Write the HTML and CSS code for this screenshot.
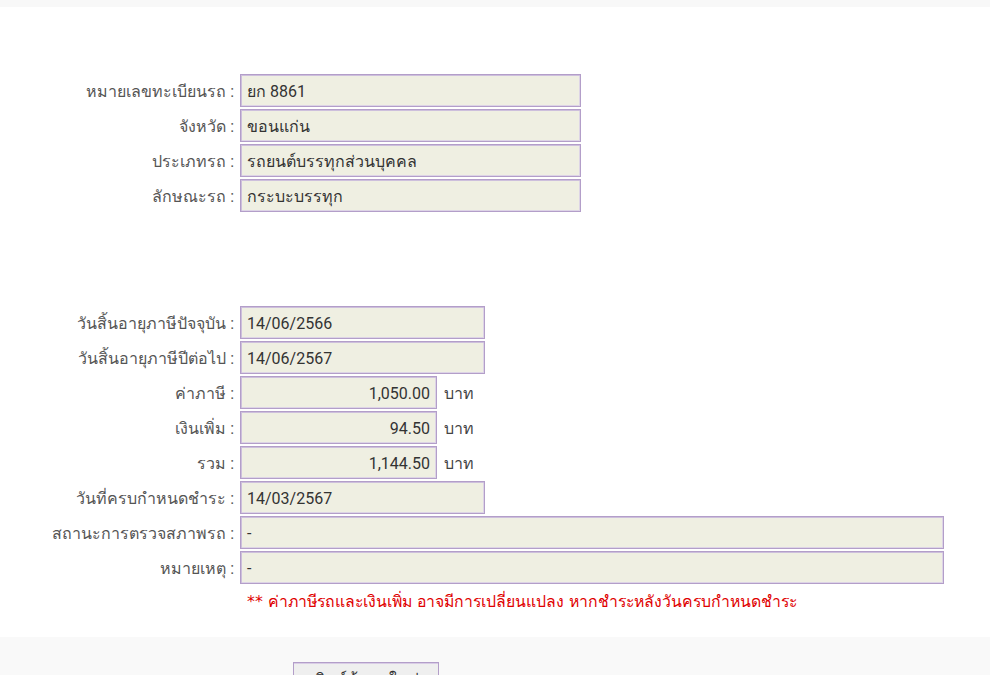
FILE: index.html
```html
<!DOCTYPE html>
<html lang="th">
<head>
<meta charset="utf-8">
<title>ผลการตรวจสอบภาษีรถ</title>
<link rel="stylesheet" href="styles.css">
</head>
<body>
<div class="topbar"></div>
<main class="content">
  <section class="group">
    <div class="label">หมายเลขทะเบียนรถ :</div>
    <div class="field"><div class="box w-mid">ยก 8861</div></div>
    <div class="label">จังหวัด :</div>
    <div class="field"><div class="box w-mid">ขอนแก่น</div></div>
    <div class="label">ประเภทรถ :</div>
    <div class="field"><div class="box w-mid">รถยนต์บรรทุกส่วนบุคคล</div></div>
    <div class="label">ลักษณะรถ :</div>
    <div class="field"><div class="box w-mid">กระบะบรรทุก</div></div>
  </section>

  <section class="group second">
    <div class="label">วันสิ้นอายุภาษีปัจจุบัน :</div>
    <div class="field"><div class="box w-date">14/06/2566</div></div>
    <div class="label">วันสิ้นอายุภาษีปีต่อไป :</div>
    <div class="field"><div class="box w-date">14/06/2567</div></div>
    <div class="label">ค่าภาษี :</div>
    <div class="field"><div class="box w-money num">1,050.00</div><span class="unit">บาท</span></div>
    <div class="label">เงินเพิ่ม :</div>
    <div class="field"><div class="box w-money num">94.50</div><span class="unit">บาท</span></div>
    <div class="label">รวม :</div>
    <div class="field"><div class="box w-money num">1,144.50</div><span class="unit">บาท</span></div>
    <div class="label">วันที่ครบกำหนดชำระ :</div>
    <div class="field"><div class="box w-date">14/03/2567</div></div>
    <div class="label">สถานะการตรวจสภาพรถ :</div>
    <div class="field"><div class="box w-wide">-</div></div>
    <div class="label">หมายเหตุ :</div>
    <div class="field"><div class="box w-wide">-</div></div>
    <div class="label"></div>
    <div class="note">** ค่าภาษีรถและเงินเพิ่ม อาจมีการเปลี่ยนแปลง หากชำระหลังวันครบกำหนดชำระ</div>
  </section>
</main>
<footer class="footer">
  <button class="btn" type="button">พิมพ์ข้อมูลใหม่</button>
</footer>
</body>
</html>
```
FILE: styles.css
```css
html, body {
  margin: 0;
  padding: 0;
  background: #ffffff;
  font-family: Roboto, "Noto Sans", "DejaVu Sans", sans-serif;
  font-size: 16px;
  color: #333333;
  height: 675px;
  overflow: hidden;
}

.topbar {
  height: 7px;
  background: #f8f8f8;
}

.content {
  padding-top: 67px;
  height: 563px;
}

.group {
  display: grid;
  grid-template-columns: 240px 1fr;
  row-gap: 2px;
}

.group.second {
  margin-top: 94px;
}

.label {
  text-align: right;
  padding-right: 6px;
  padding-top: 2px;
  line-height: 31px;
  height: 31px;
  color: #555555;
  white-space: nowrap;
}

.field {
  display: flex;
  align-items: center;
  gap: 7px;
}

.box {
  box-sizing: border-box;
  height: 33px;
  padding: 2px 6px 0 6px;
  line-height: 29px;
  background: #efefe2;
  border: 1px solid #b39ec9;
  box-shadow: inset 1px 1px 0 #cdbfdc, inset -1px -1px 0 #ddd4e6;
  color: #333333;
  white-space: nowrap;
  overflow: hidden;
}

.w-mid { width: 341px; }
.w-date { width: 245px; }
.w-money { width: 197px; }
.w-wide { width: 704px; }

.num { text-align: right; }

.unit {
  color: #444444;
  padding-top: 2px;
}

.note {
  padding-left: 7px;
  padding-top: 4px;
  color: #e00000;
  font-family: "DejaVu Sans", Roboto, sans-serif;
  font-size: 15.8px;
  line-height: 24px;
}

.footer {
  background: #f9f9f9;
  height: 38px;
  padding-top: 25px;
  box-sizing: content-box;
}

.btn {
  margin-left: 293px;
  width: 146px;
  height: 36px;
  background: #efefef;
  border: 1px solid #b39ec9;
  box-shadow: inset 0 1px 0 #d9cde6;
  font-family: Roboto, "Noto Sans", sans-serif;
  font-size: 16px;
  color: #333333;
  padding: 0;
  line-height: 20px;
  text-align: center;
  vertical-align: top;
}
```
